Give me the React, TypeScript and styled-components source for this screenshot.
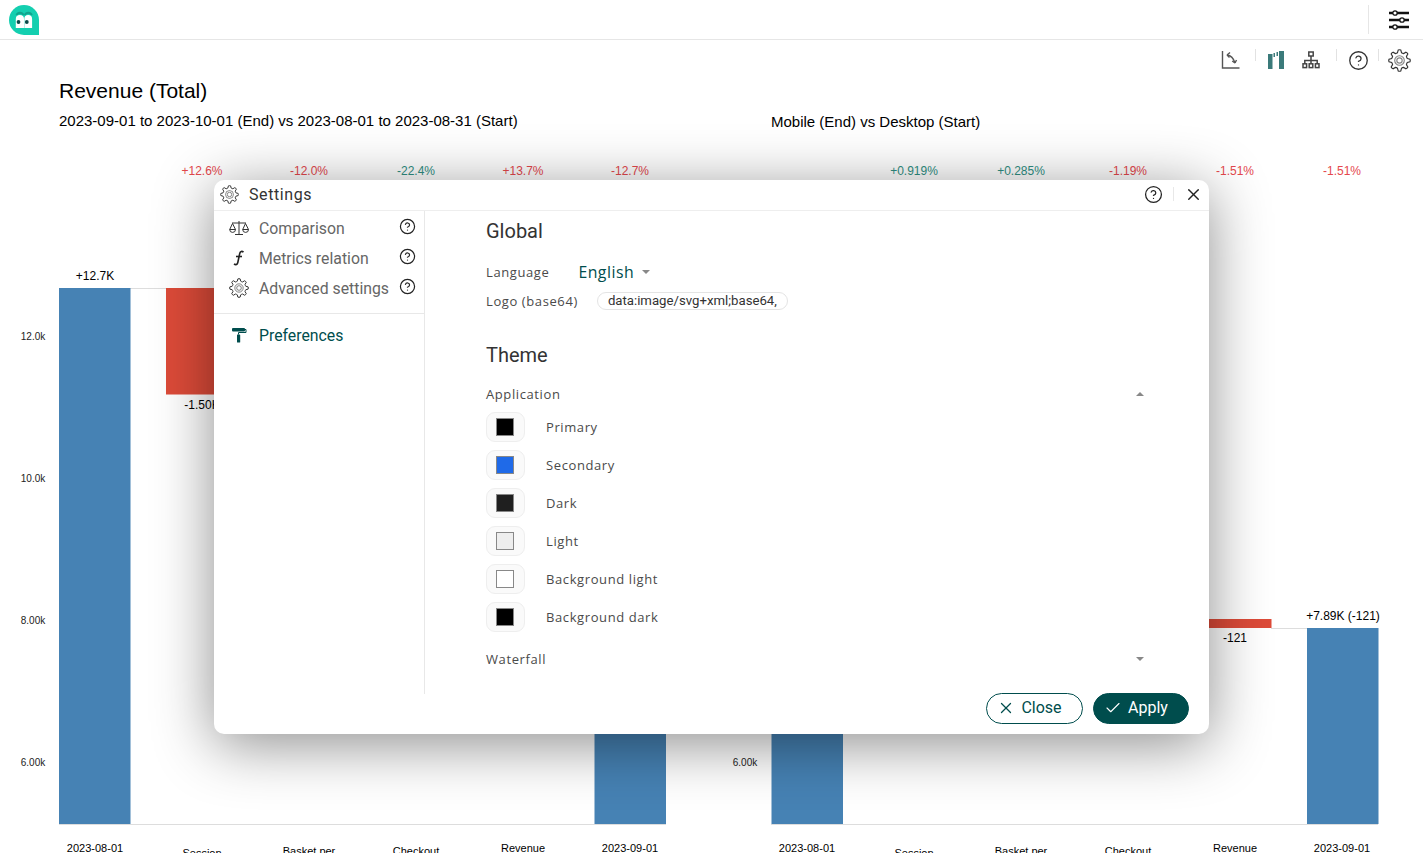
import React from 'react';
import styled, { createGlobalStyle } from 'styled-components';
import { Check, CircleHelp, X } from 'lucide-react';

const TEAL = '#004d4d';

const gearPath = (teeth: number, outer: number, inner: number) => {
    const step = (Math.PI * 2) / teeth;
    const pts: string[] = [];
    for (let i = 0; i < teeth; i++) {
        const a = i * step;
        const at = (r: number, t: number) => `${(12 + r * Math.cos(a + t * step)).toFixed(2)} ${(12 + r * Math.sin(a + t * step)).toFixed(2)}`;
        pts.push(`${i === 0 ? 'M' : 'L'}${at(inner, -0.32)}`);
        pts.push(`L${at(outer, -0.16)}`);
        pts.push(`Q${at(outer + 0.5, 0)} ${at(outer, 0.16)}`);
        pts.push(`L${at(inner, 0.32)}`);
        pts.push(`Q${at(inner - 0.3, 0.5)} ${at(inner, 0.68)}`);
    }
    return pts.join(' ') + 'Z';
};

const GearIcon = ({ size }: { size: number }) => (
    <svg width={size} height={size} viewBox="0 0 24 24" fill="none" stroke="#333" strokeWidth="1.2">
        <path d={gearPath(8, 11, 8.4)} />
        <circle cx="12" cy="12" r="5" strokeOpacity="0.6" />
        <circle cx="12" cy="12" r="2.8" strokeOpacity="0.6" />
    </svg>
);

const Logo = () => (
    <svg width="30" height="30" viewBox="0 0 30 30">
        <path d="M15 0a15 15 0 0 1 15 15v15H15A15 15 0 0 1 15 0Z" fill="#14cfb0" />
        <path d="M7.500 10a3.800 3.800 0 0 1 7 0M15.800 10a3.800 3.800 0 0 1 7 0" fill="none" stroke="#0fa48d" strokeWidth="2" />
        <path d="M6.800 23v-9a4.100 4.100 0 0 1 8.200 0v9Z" fill="#fff" />
        <path d="M15.300 23v-9a3.900 3.900 0 0 1 7.800 0v9Z" fill="#fff" />
        <circle cx="9.500" cy="17" r="1.900" fill="#0c4a4a" />
        <circle cx="17.800" cy="17" r="1.900" fill="#0c4a4a" />
    </svg>
);

const SlidersIcon = () => (
    <svg width="22" height="20" viewBox="0 0 22 20" fill="#fff" stroke="#111">
        <path d="M1 3h20M1 10h20M1 17h20" strokeWidth="2.400" />
        <circle cx="7" cy="3" r="2.200" strokeWidth="1.300" />
        <circle cx="14" cy="10" r="2.200" strokeWidth="1.300" />
        <circle cx="7" cy="17" r="2.200" strokeWidth="1.300" />
    </svg>
);

const AxisIcon = () => (
    <svg width="20" height="20" viewBox="0 0 20 20" fill="none" stroke="#555" strokeWidth="1.400">
        <path d="M1.500 1v17h17" />
        <path d="M6 5c3.500.5 6.500 3 8 8" />
        <path d="M6 5l3-2.500M6 5l2.500 2.500M14 13l-2.800-2M14 13l1.500-3" />
    </svg>
);

const BarsIcon = () => (
    <svg width="16" height="18" viewBox="0 0 16 18" fill="#3b7a7a">
        <rect x="0" y="3" width="4.500" height="15" />
        <rect x="5.500" y="2" width="1.500" height="4" />
        <rect x="8.500" y="1" width="1.500" height="4" />
        <rect x="11" y="0" width="5" height="18" />
    </svg>
);

const TreeIcon = () => (
    <svg width="18" height="18" viewBox="0 0 18 18" fill="none" stroke="#444" strokeWidth="1.500">
        <rect x="6.800" y="1" width="4.400" height="4" />
        <rect x="1" y="12.800" width="3.600" height="3.800" />
        <rect x="7.200" y="12.800" width="3.600" height="3.800" />
        <rect x="13.400" y="12.800" width="3.600" height="3.800" />
        <path d="M9 5v8M2.800 13V9.500h12.400V13" />
    </svg>
);

const ScaleIcon = () => (
    <svg width="20" height="16" viewBox="0 0 20 16" fill="none" stroke="#333" strokeWidth="1">
        <path d="M3 3h14M10 1v13M6 14.500h8" />
        <path d="M3.500 3.500L.7 9.500h5.800ZM16.500 3.500l-2.800 6h5.800Z" />
        <path d="M.7 9.500a2.900 2.900 0 0 0 5.800 0M13.700 9.500a2.900 2.900 0 0 0 5.800 0" />
    </svg>
);

const FunctionIcon = () => (
    <svg width="12" height="16" viewBox="0 0 12 16" fill="none" stroke="#222" strokeWidth="1.600">
        <path d="M10.500 2.200C9 .8 7.300 1.200 6.800 3.200L4.800 12.500C4.300 14.700 2.700 15.200 1 14" />
        <path d="M3 6.500h6" />
    </svg>
);

const RollerIcon = () => (
    <svg width="16" height="16" viewBox="0 0 16 16" fill={TEAL}>
        <rect x="1" y="1" width="13" height="3.500" rx="1" />
        <path d="M13.500 2.500h1.500v3H7.500v2" fill="none" stroke={TEAL} strokeWidth="1" />
        <rect x="6" y="7.500" width="3.200" height="8" rx="0.500" />
    </svg>
);

type Bar = { x: number; top: number; bottom: number; kind: 'total' | 'down' };

const bars: Bar[] = [
    { x: 59, top: 288, bottom: 824, kind: 'total' },
    { x: 166, top: 288, bottom: 394.500, kind: 'down' },
    { x: 594.500, top: 640, bottom: 824, kind: 'total' },
    { x: 771.500, top: 640, bottom: 824, kind: 'total' },
    { x: 1200, top: 619, bottom: 628, kind: 'down' },
    { x: 1307, top: 628, bottom: 824, kind: 'total' },
];

const percents = [
    { x: 202, text: '+12.6%', good: false },
    { x: 309, text: '-12.0%', good: false },
    { x: 416, text: '-22.4%', good: true },
    { x: 523, text: '+13.7%', good: false },
    { x: 630, text: '-12.7%', good: false },
    { x: 914, text: '+0.919%', good: true },
    { x: 1021, text: '+0.285%', good: true },
    { x: 1128, text: '-1.19%', good: false },
    { x: 1235, text: '-1.51%', good: false },
    { x: 1342, text: '-1.51%', good: false },
];

const ticks = [
    { x: 33, y: 337, text: '12.0k' },
    { x: 33, y: 479, text: '10.0k' },
    { x: 33, y: 621, text: '8.00k' },
    { x: 33, y: 763, text: '6.00k' },
    { x: 745, y: 763, text: '6.00k' },
];

const values = [
    { x: 95, y: 280, text: '+12.7K' },
    { x: 202, y: 409, text: '-1.50K' },
    { x: 1235, y: 642, text: '-121' },
    { x: 1343, y: 620, text: '+7.89K (-121)' },
];

const categories = [
    { x: 95, y: 852, text: '2023-08-01' },
    { x: 202, y: 857, text: 'Session' },
    { x: 309, y: 855, text: 'Basket per' },
    { x: 416, y: 855, text: 'Checkout' },
    { x: 523, y: 852, text: 'Revenue' },
    { x: 630, y: 852, text: '2023-09-01' },
    { x: 807, y: 852, text: '2023-08-01' },
    { x: 914, y: 857, text: 'Session' },
    { x: 1021, y: 855, text: 'Basket per' },
    { x: 1128, y: 855, text: 'Checkout' },
    { x: 1235, y: 852, text: 'Revenue' },
    { x: 1342, y: 852, text: '2023-09-01' },
];

const Charts = () => (
    <ChartSvg viewBox="0 140 1423 713" width="1423" height="713">
        <path d="M59 824.500H666M771 824.500H1378M130 288.500H166M1271 628.500H1307" stroke="#ddd" fill="none" />
        {bars.map((b) => (
            <rect key={b.x} x={b.x} y={b.top} width="71.500" height={b.bottom - b.top} fill={b.kind === 'total' ? '#4682b4' : '#dd4b39'} />
        ))}
        {percents.map((p) => (
            <text key={p.x} x={p.x} y="175" fontSize="12" textAnchor="middle" fill={p.good ? '#2f8f83' : '#e5484d'}>{p.text}</text>
        ))}
        {ticks.map((t) => (
            <text key={t.x + t.text} x={t.x} y={t.y + 3} fontSize="10" textAnchor="middle" fill="#222">{t.text}</text>
        ))}
        {values.map((v) => (
            <text key={v.text} x={v.x} y={v.y} fontSize="12" textAnchor="middle" fill="#000">{v.text}</text>
        ))}
        {categories.map((c) => (
            <text key={c.x} x={c.x} y={c.y} fontSize="11" textAnchor="middle" fill="#000">{c.text}</text>
        ))}
    </ChartSvg>
);

const swatches = [
    { label: 'Primary', color: '#000000' },
    { label: 'Secondary', color: '#1f6ae8' },
    { label: 'Dark', color: '#1f1f1f' },
    { label: 'Light', color: '#eeeeee' },
    { label: 'Background light', color: '#ffffff' },
    { label: 'Background dark', color: '#000000' },
];

const App = () => (
    <>
        <GlobalStyle />
        <Page>
            <TopBar>
                <Logo />
                <TopRight>
                    <TopDivider />
                    <SlidersIcon />
                </TopRight>
            </TopBar>
            <Toolbar>
                <AxisIcon />
                <ToolDivider $left={3} $right={1} />
                <ToolGroup>
                    <BarsIcon />
                    <TreeIcon />
                </ToolGroup>
                <ToolDivider $left={5} />
                <CircleHelp size={21} strokeWidth={1.5} color="#333" />
                <ToolDivider $left={-2} $right={-2} />
                <GearIcon size={23} />
            </Toolbar>
            <Heading>
                <Title>Revenue (Total)</Title>
                <SubtitleRow>
                    <Subtitle>2023-09-01 to 2023-10-01 (End) vs 2023-08-01 to 2023-08-31 (Start)</Subtitle>
                    <SecondSubtitle>Mobile (End) vs Desktop (Start)</SecondSubtitle>
                </SubtitleRow>
            </Heading>
            <Charts />
            <Modal>
                <ModalHeader>
                    <GearIcon size={19} />
                    <ModalTitle>Settings</ModalTitle>
                    <HeaderActions>
                        <CircleHelp size={19} strokeWidth={1.6} color="#222" />
                        <HeaderDivider />
                        <X size={19} strokeWidth={1.8} color="#222" />
                    </HeaderActions>
                </ModalHeader>
                <ModalBody>
                    <Sidebar>
                        <SideGroup>
                            <SideItem>
                                <SideIcon><ScaleIcon /></SideIcon>
                                <SideLabel>Comparison</SideLabel>
                                <CircleHelp size={17} strokeWidth={1.700} color="#222" />
                            </SideItem>
                            <SideItem>
                                <SideIcon><FunctionIcon /></SideIcon>
                                <SideLabel>Metrics relation</SideLabel>
                                <CircleHelp size={17} strokeWidth={1.700} color="#222" />
                            </SideItem>
                            <SideItem>
                                <SideIcon><GearIcon size={20} /></SideIcon>
                                <SideLabel>Advanced settings</SideLabel>
                                <CircleHelp size={17} strokeWidth={1.700} color="#222" />
                            </SideItem>
                        </SideGroup>
                        <SideItem $active>
                            <SideIcon><RollerIcon /></SideIcon>
                            <SideLabel>Preferences</SideLabel>
                        </SideItem>
                    </Sidebar>
                    <Content>
                        <SectionTitle>Global</SectionTitle>
                        <FieldRow>
                            <FieldLabel>Language</FieldLabel>
                            <LanguageValue>English</LanguageValue>
                            <Caret />
                        </FieldRow>
                        <LogoRow>
                            <FieldLabel>Logo (base64)</FieldLabel>
                            <LogoInput>data:image/svg+xml;base64,</LogoInput>
                        </LogoRow>
                        <ThemeTitle>Theme</ThemeTitle>
                        <GroupRow>
                            <FieldLabel>Application</FieldLabel>
                            <Caret $up />
                        </GroupRow>
                        <SwatchList>
                            {swatches.map((s) => (
                                <SwatchRow key={s.label}>
                                    <SwatchButton><SwatchColor $color={s.color} /></SwatchButton>
                                    <FieldLabel>{s.label}</FieldLabel>
                                </SwatchRow>
                            ))}
                        </SwatchList>
                        <WaterfallRow>
                            <FieldLabel>Waterfall</FieldLabel>
                            <Caret />
                        </WaterfallRow>
                    </Content>
                </ModalBody>
                <ModalFooter>
                    <ActionButton>
                        <X size={18} strokeWidth={1.700} />
                        Close
                    </ActionButton>
                    <ActionButton $primary>
                        <Check size={18} strokeWidth={1.500} />
                        Apply
                    </ActionButton>
                </ModalFooter>
            </Modal>
        </Page>
    </>
);

export default App;

const GlobalStyle = createGlobalStyle`
    html, body {
        margin: 0;
        height: 100%;
        overflow: hidden;
        background: #fff;
        font-family: "Liberation Sans", Arial, sans-serif;
    }
`;

const Page = styled.div`
    position: relative;
    width: 1423px;
    height: 853px;
    overflow: hidden;
`;

const TopBar = styled.header`
    display: flex;
    align-items: center;
    justify-content: space-between;
    box-sizing: border-box;
    height: 40px;
    padding: 0 13px 0 9px;
    border-bottom: 1px solid #e6e6e6;
`;

const TopRight = styled.div`
    display: flex;
    align-items: center;
    gap: 19px;
`;

const TopDivider = styled.span`
    width: 1px;
    height: 29px;
    background: #e6e6e6;
`;

const Toolbar = styled.div`
    display: flex;
    align-items: center;
    justify-content: flex-end;
    gap: 11px;
    height: 40px;
    padding-right: 12px;
`;

const ToolGroup = styled.div`
    display: flex;
    align-items: center;
    gap: 18px;
`;

const ToolDivider = styled.span<{ $left?: number; $right?: number }>`
    width: 1px;
    height: 12px;
    margin: -10px ${(p) => p.$right ?? 0}px 0 ${(p) => p.$left ?? 0}px;
    background: #e2e2e2;
`;

const Heading = styled.div`
    box-sizing: border-box;
    height: 60px;
    padding: 0 0 0 59px;
`;

const Title = styled.h1`
    margin: 0;
    height: 22px;
    font-size: 21px;
    line-height: 22px;
    font-weight: 400;
    color: #000;
`;

const SubtitleRow = styled.div`
    display: flex;
    margin-top: 9px;
`;

const Subtitle = styled.div`
    width: 712px;
    font-size: 15px;
    line-height: 20px;
    color: #000;
`;

const SecondSubtitle = styled(Subtitle)`
    width: auto;
    padding-top: 1px;
`;

const ChartSvg = styled.svg`
    display: block;
    font-family: "Liberation Sans", Arial, sans-serif;
`;

const Modal = styled.section`
    position: absolute;
    left: 214px;
    top: 180px;
    display: flex;
    flex-direction: column;
    width: 995px;
    height: 554px;
    border-radius: 10px;
    background: #fff;
    box-shadow: 0 10px 60px rgba(0, 0, 0, 0.45);
`;

const ModalHeader = styled.div`
    display: flex;
    align-items: center;
    box-sizing: border-box;
    height: 31px;
    padding: 0 6px 2px 6px;
    border-bottom: 1px solid #eee;
`;

const ModalTitle = styled.h2`
    margin: 0 0 0 10px;
    font-family: Roboto, sans-serif;
    font-size: 16px;
    font-weight: 400;
    letter-spacing: 0.6px;
    color: #333;
`;

const HeaderActions = styled.div`
    display: flex;
    align-items: center;
    gap: 10px;
    margin-left: auto;
`;

const HeaderDivider = styled.span`
    width: 1px;
    height: 14px;
    background: #e8e8e8;
`;

const ModalBody = styled.div`
    display: flex;
    height: 483px;
`;

const Sidebar = styled.nav`
    box-sizing: border-box;
    flex: 0 0 211px;
    padding-top: 2px;
    border-right: 1px solid #e8e8e8;
`;

const SideGroup = styled.div`
    padding-bottom: 10px;
    margin-bottom: 6px;
    border-bottom: 1px solid #e8e8e8;
`;

const SideItem = styled.div<{ $active?: boolean }>`
    display: flex;
    align-items: center;
    height: 30px;
    padding: 0 8px 0 15px;
    font-family: Roboto, sans-serif;
    font-size: 15.800px;
    color: ${(p) => (p.$active ? TEAL : '#666')};

    & > svg {
        margin: -4px 0 0 auto;
    }
`;

const SideIcon = styled.span`
    display: flex;
    justify-content: center;
    flex: 0 0 20px;
    margin-right: 10px;
`;

const SideLabel = styled.span`
    white-space: nowrap;
`;

const Content = styled.div`
    flex: 1;
    box-sizing: border-box;
    padding: 6px 65px 0 61px;
    font-family: "Open Sans", sans-serif;
`;

const SectionTitle = styled.h3`
    margin: 0;
    font-family: Roboto, sans-serif;
    font-size: 20px;
    line-height: 28px;
    font-weight: 400;
    color: #333;
`;

const ThemeTitle = styled(SectionTitle)`
    margin-top: 26px;
`;

const FieldRow = styled.div`
    display: flex;
    align-items: center;
    height: 28px;
    margin-top: 13px;
`;

const FieldLabel = styled.span`
    font-size: 13px;
    letter-spacing: 0.6px;
    color: #4a4a4a;
    white-space: nowrap;
`;

const LanguageValue = styled.span`
    margin-left: 29px;
    font-size: 15.800px;
    letter-spacing: 0.5px;
    color: ${TEAL};
`;

const Caret = styled.span<{ $up?: boolean }>`
    width: 0;
    height: 0;
    margin-left: 8px;
    border-left: 4px solid transparent;
    border-right: 4px solid transparent;
    ${(p) => (p.$up ? 'border-bottom: 4px solid #888;' : 'border-top: 4px solid #888;')}
`;

const LogoRow = styled.div`
    display: flex;
    align-items: center;
    gap: 19px;
    height: 29px;
`;

const LogoInput = styled.div`
    box-sizing: border-box;
    width: 191px;
    height: 18px;
    padding-left: 10px;
    overflow: hidden;
    border: 1px solid #e4e4e4;
    border-radius: 9px;
    font-family: Roboto, sans-serif;
    font-size: 13.200px;
    line-height: 16px;
    color: #333;
    white-space: nowrap;
`;

const GroupRow = styled.div`
    display: flex;
    align-items: center;
    justify-content: space-between;
    height: 24px;
    margin-top: 13px;
`;

const WaterfallRow = styled(GroupRow)`
    margin-top: 15px;
`;

const SwatchList = styled.div`
    display: flex;
    flex-direction: column;
    gap: 8px;
    margin: 6px 0 0;
`;

const SwatchRow = styled.div`
    display: flex;
    align-items: center;
    gap: 21px;
`;

const SwatchButton = styled.div`
    display: flex;
    align-items: center;
    justify-content: center;
    box-sizing: border-box;
    width: 39px;
    height: 30px;
    padding-right: 1px;
    border: 1px solid #eee;
    border-radius: 9px;
    background: #fafafa;
`;

const SwatchColor = styled.span<{ $color: string }>`
    box-sizing: border-box;
    width: 18px;
    height: 18px;
    border: 1px solid #888;
    background: ${(p) => p.$color};
`;

const ModalFooter = styled.div`
    display: flex;
    justify-content: flex-end;
    gap: 10px;
    margin-top: -1px;
    padding-right: 20px;
`;

const ActionButton = styled.button<{ $primary?: boolean }>`
    display: flex;
    align-items: center;
    justify-content: center;
    gap: 6px;
    box-sizing: border-box;
    width: ${(p) => (p.$primary ? '96px' : '97px')};
    height: 31px;
    padding: 0 10px 2px 0;
    border: 1px solid ${TEAL};
    border-radius: 16px;
    background: ${(p) => (p.$primary ? TEAL : '#fff')};
    color: ${(p) => (p.$primary ? '#fff' : TEAL)};
    font-family: Roboto, sans-serif;
    font-size: 16px;
`;
